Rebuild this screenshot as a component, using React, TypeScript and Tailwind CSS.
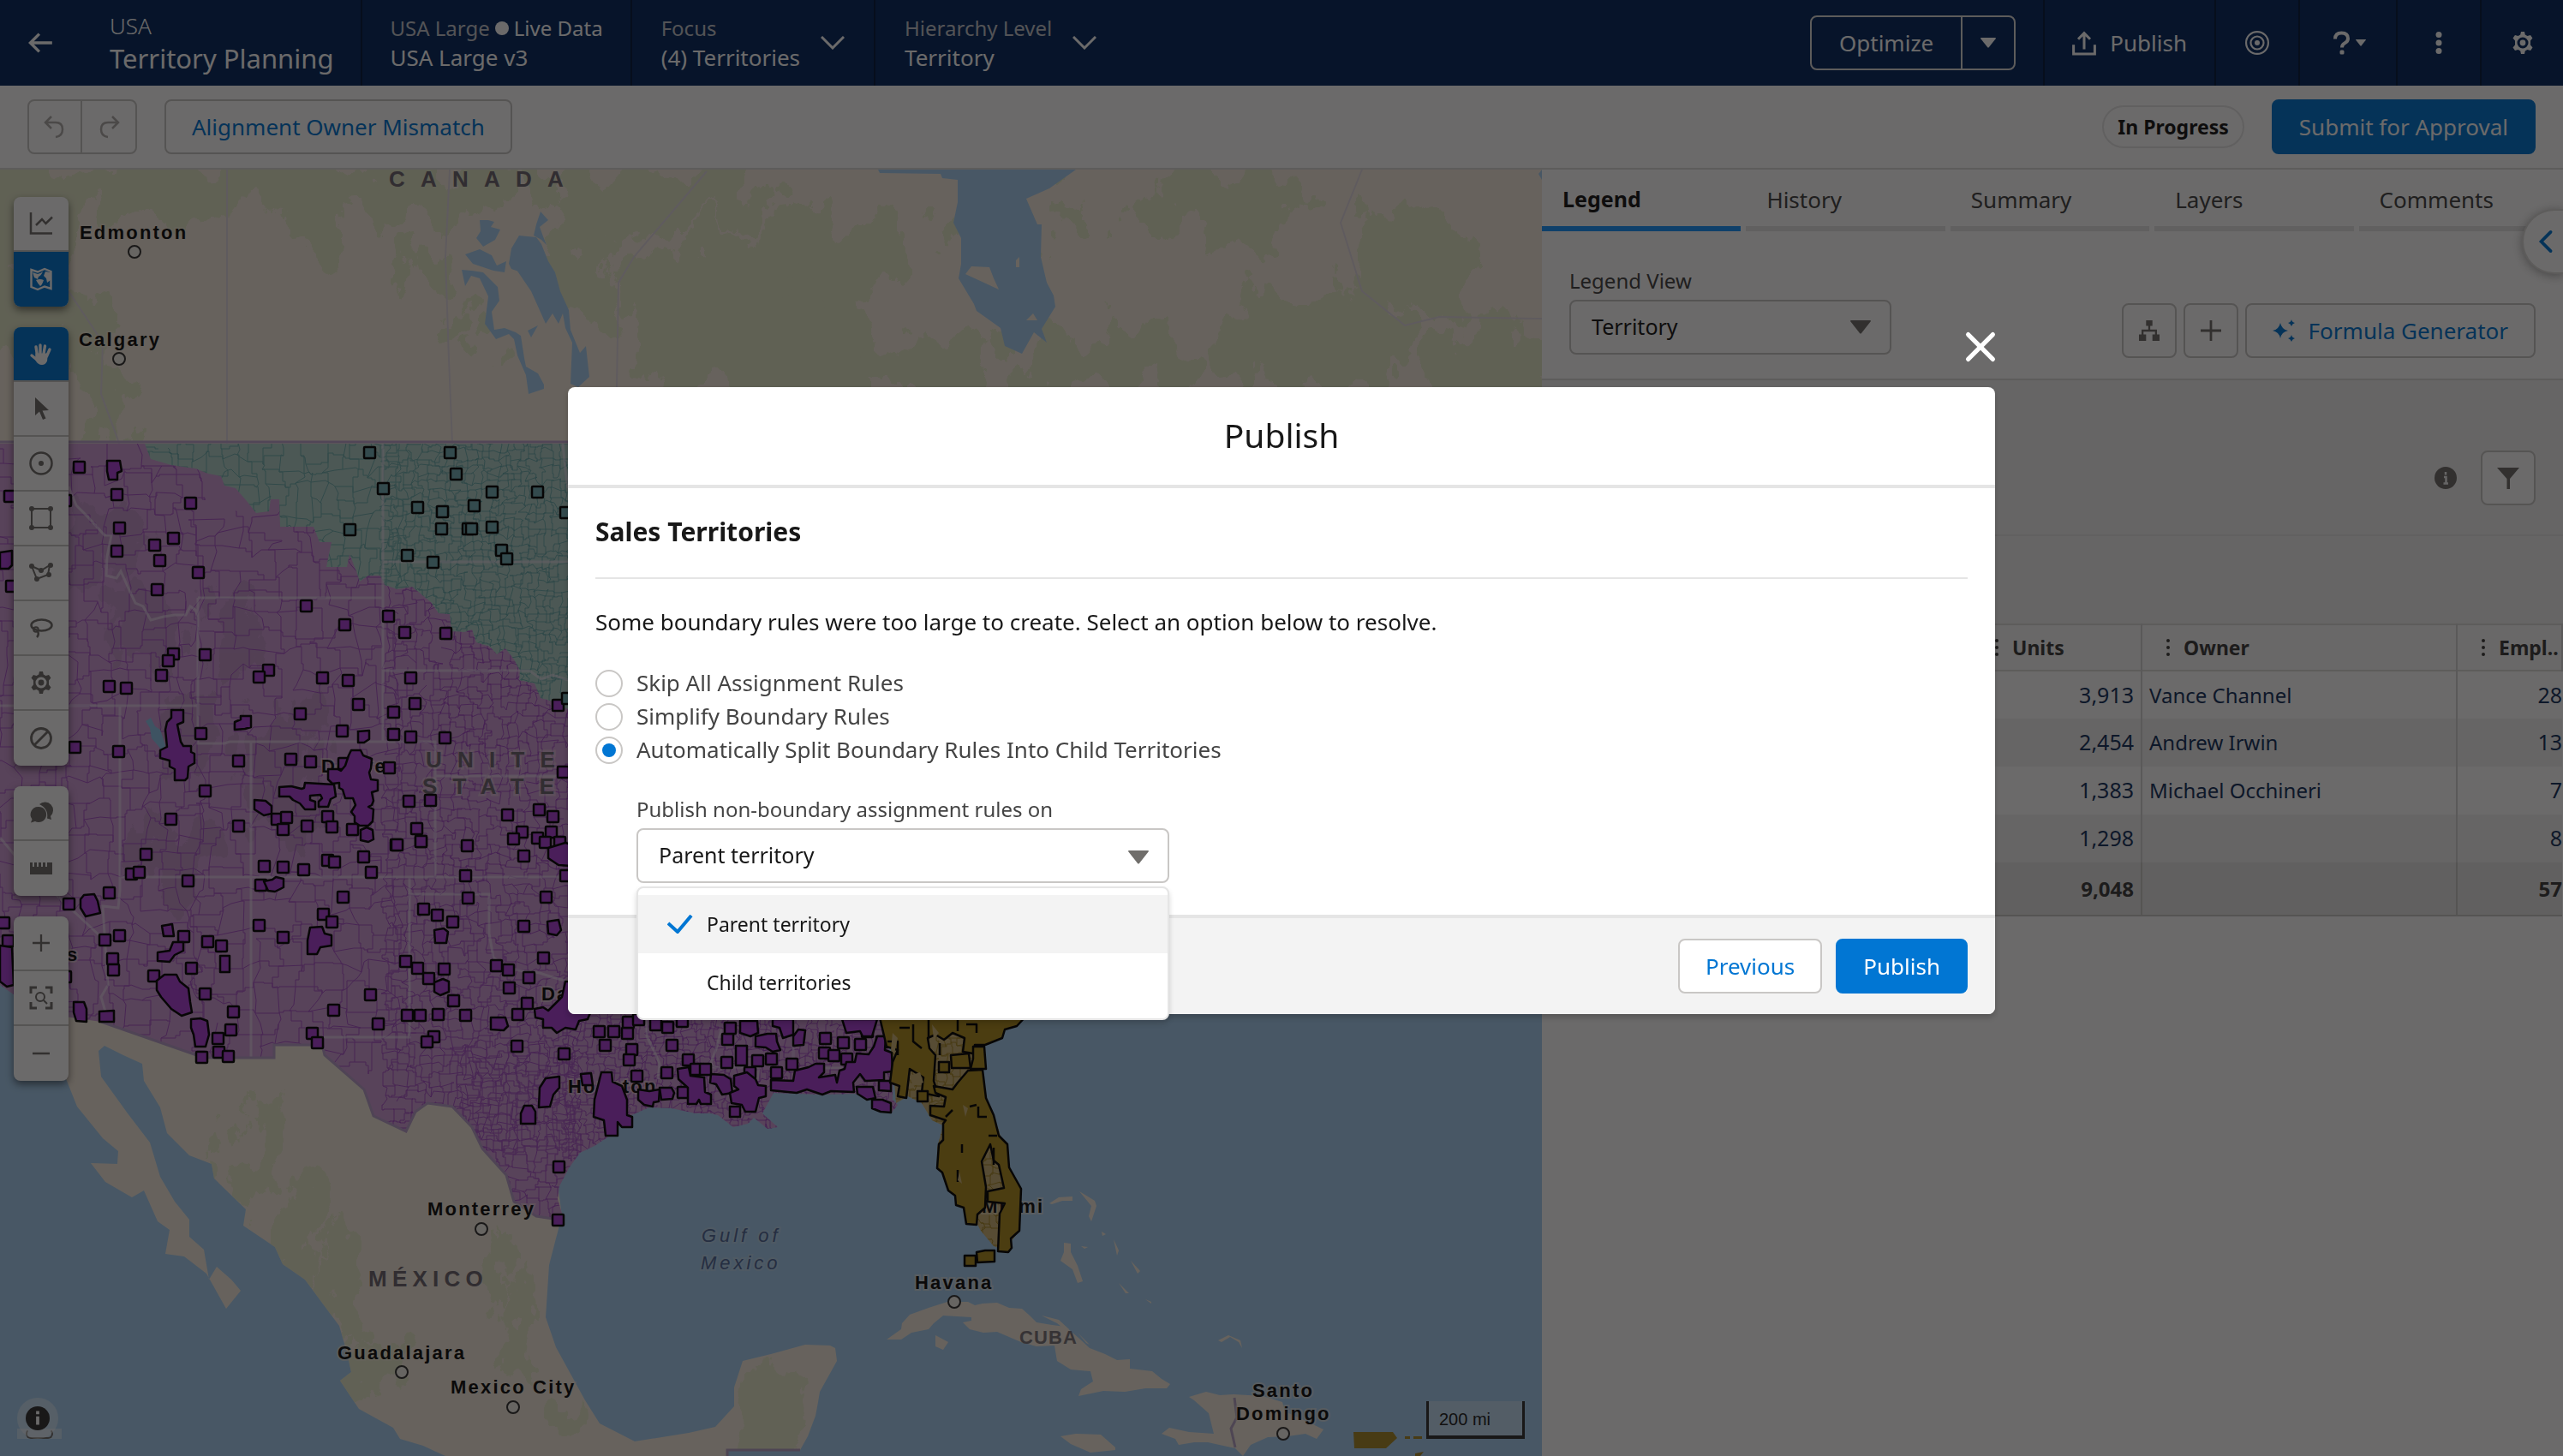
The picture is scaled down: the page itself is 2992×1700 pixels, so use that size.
//territory-planning.tsx
import type { ReactNode } from "react";
import clsx from "clsx";

type Point = [number, number];

/* ---------- map geometry ---------- */

const toPath = (points: Point[]) => `M${points.map((p) => p.join(" ")).join("L")}Z`;

// small seeded generator so the zip code mesh is stable between renders
function random(seed: number) {
	let s = seed;
	return () => {
		s = (s * 16807) % 2147483647;
		return s / 2147483647;
	};
}

function mesh(x0: number, y0: number, x1: number, y1: number, step: number, seed: number) {
	const rnd = random(seed);
	const cols = Math.ceil((x1 - x0) / step) + 1;
	const rows = Math.ceil((y1 - y0) / step) + 1;
	const grid: Point[][] = [];
	for (let r = 0; r < rows; r++) {
		grid.push([]);
		for (let c = 0; c < cols; c++) {
			grid[r].push([
				Math.round(x0 + c * step + (rnd() - 0.5) * step * 0.9),
				Math.round(y0 + r * step + (rnd() - 0.5) * step * 0.9),
			]);
		}
	}
	let d = "";
	const link = (a: Point, b: Point) => {
		if (rnd() < 0.12) return;
		const mx = Math.round(a[0] + (b[0] - a[0]) * rnd());
		const my = Math.round(a[1] + (b[1] - a[1]) * rnd());
		d += rnd() < 0.6 ? `M${a[0]} ${a[1]}H${mx}V${my}H${b[0]}V${b[1]}` : `M${a[0]} ${a[1]}L${mx + 2} ${my - 2}L${b[0]} ${b[1]}`;
	};
	for (let r = 0; r < rows; r++) {
		for (let c = 0; c < cols; c++) {
			if (c + 1 < cols) link(grid[r][c], grid[r][c + 1]);
			if (r + 1 < rows) link(grid[r][c], grid[r + 1][c]);
		}
	}
	return d;
}

// cx, cy, rx, ry of the vegetation areas, roughened by the "rough" filter
const GREENS = [
	[40, 230, 110, 50], [180, 220, 120, 30], [30, 330, 60, 90], [100, 400, 30, 80],
	[120, 470, 22, 50], [360, 215, 150, 34], [375, 262, 26, 26], [500, 225, 110, 32],
	[490, 312, 26, 24], [535, 372, 22, 20], [560, 408, 30, 10], [680, 240, 60, 60],
	[690, 330, 30, 60], [800, 230, 110, 40], [860, 370, 140, 100], [930, 420, 110, 70],
	[970, 300, 110, 50], [1080, 430, 80, 30], [1240, 250, 28, 30], [1300, 420, 110, 40],
	[1420, 240, 90, 50], [1530, 400, 110, 70], [1650, 300, 80, 70], [1740, 430, 90, 60],
];

const MEXICO_GREENS = [
	[300, 1340, 22, 70], [350, 1440, 26, 80], [400, 1500, 28, 60], [430, 1590, 26, 50],
	[575, 1480, 14, 50], [600, 1550, 16, 60], [660, 1650, 30, 16], [900, 1650, 34, 60], [1484, 1665, 10, 14],
];

const MEXICO = toPath([
	[40, 1180], [78, 1262], [90, 1292], [103, 1308], [120, 1329], [138, 1344], [137, 1359], [106, 1358], [123, 1380], [154, 1398],
	[168, 1390], [184, 1426], [198, 1436], [193, 1464], [215, 1467], [241, 1487], [264, 1528], [281, 1507], [270, 1494], [253, 1479],
	[244, 1494], [238, 1459], [221, 1444], [221, 1424], [204, 1403], [187, 1374], [175, 1334], [149, 1300], [118, 1257], [115, 1227],
	[122, 1221], [144, 1232], [166, 1242], [168, 1262], [187, 1293], [195, 1323], [221, 1349], [247, 1359], [250, 1376], [287, 1412],
	[284, 1431], [321, 1456], [330, 1476], [356, 1494], [396, 1548], [405, 1579], [410, 1602], [397, 1612], [419, 1645], [459, 1667],
	[467, 1680], [494, 1688], [520, 1700], [850, 1700], [849, 1693], [934, 1693], [943, 1677], [952, 1653], [955, 1637], [957, 1625],
	[977, 1589], [975, 1574], [969, 1571], [940, 1570], [900, 1581], [867, 1589], [857, 1620], [857, 1642], [835, 1666], [804, 1673],
	[741, 1683], [700, 1662], [683, 1635], [649, 1573], [637, 1538], [641, 1477], [649, 1446], [656, 1420], [640, 1300], [480, 1200], [100, 1170],
]);

const USA_WEST = toPath([
	[0, 518], [1060, 518], [1040, 1190], [1035, 1215], [1042, 1240], [1042, 1284], [1048, 1290], [1040, 1300], [1015, 1283], [998, 1277],
	[957, 1278], [903, 1276], [890, 1300], [908, 1316], [896, 1318], [880, 1305], [873, 1312], [856, 1316], [838, 1302], [830, 1300],
	[812, 1300], [784, 1294], [758, 1293], [735, 1303], [712, 1326], [694, 1338], [677, 1346], [664, 1364], [653, 1385], [651, 1400],
	[657, 1420], [650, 1425], [626, 1420], [600, 1403], [591, 1372], [563, 1341], [551, 1316], [528, 1292], [499, 1288], [485, 1298],
	[474, 1321], [436, 1303], [425, 1272], [379, 1232], [376, 1220], [320, 1220], [320, 1235], [238, 1235], [118, 1193], [76, 1187],
	[46, 1190], [20, 1164], [0, 1150],
]);

const TEAL = toPath([
	[169, 518], [176, 536], [200, 543], [228, 547], [243, 553], [258, 556], [262, 567], [275, 570], [288, 585], [299, 599], [314, 597],
	[316, 583], [326, 583], [327, 615], [366, 615], [373, 633], [387, 633], [381, 662], [405, 662], [408, 647], [416, 667], [420, 679],
	[430, 672], [444, 672], [449, 683], [464, 688], [481, 685], [492, 694], [503, 703], [512, 716], [525, 717], [527, 737], [542, 738],
	[551, 735], [556, 750], [572, 755], [580, 764], [590, 757], [600, 770], [607, 783], [606, 794], [624, 798], [631, 815], [642, 818],
	[663, 828], [760, 828], [760, 518],
]);

const FLORIDA = toPath([
	[1035, 1184], [1200, 1184], [1170, 1205], [1150, 1220], [1147, 1250], [1152, 1284], [1166, 1320], [1178, 1363], [1192, 1388],
	[1190, 1437], [1172, 1460], [1160, 1455], [1145, 1437], [1125, 1400], [1100, 1369], [1094, 1340], [1101, 1314], [1088, 1308], [1076, 1288], [1060, 1280], [1046, 1288], [1042, 1240],
]);

const GOLD_CLUSTERS: Point[][] = [
	[[1026, 1184], [1200, 1184], [1187, 1198], [1173, 1202], [1170, 1212], [1150, 1220], [1138, 1220], [1136, 1230], [1124, 1228], [1126, 1212], [1112, 1206], [1102, 1214], [1092, 1208], [1083, 1212], [1085, 1224], [1092, 1232], [1090, 1262], [1096, 1280], [1076, 1276], [1078, 1258], [1062, 1248], [1058, 1282], [1048, 1280], [1050, 1268], [1039, 1264], [1042, 1240], [1048, 1226], [1035, 1222]],
	[[1110, 1232], [1131, 1230], [1133, 1247], [1111, 1247]],
	[[1136, 1236], [1136, 1222], [1149, 1222], [1151, 1248], [1133, 1248]],
	[[1096, 1240], [1108, 1240], [1108, 1252], [1096, 1252]],
	[[1130, 1250], [1147, 1249], [1151, 1282], [1160, 1302], [1166, 1326], [1176, 1336], [1178, 1363], [1192, 1388], [1190, 1437], [1180, 1446], [1181, 1457], [1177, 1462], [1165, 1461], [1167, 1417], [1173, 1405], [1153, 1403], [1153, 1391], [1172, 1387], [1166, 1360], [1160, 1355], [1156, 1336], [1146, 1356], [1151, 1386], [1150, 1410], [1141, 1418], [1140, 1430], [1128, 1429], [1125, 1410], [1116, 1407], [1115, 1396], [1107, 1390], [1100, 1369], [1094, 1364], [1096, 1336], [1101, 1331], [1101, 1312], [1104, 1308], [1086, 1302], [1086, 1291], [1102, 1292], [1104, 1281], [1092, 1276], [1090, 1268], [1112, 1272], [1118, 1264]],
	[[1126, 1466], [1139, 1466], [1139, 1478], [1126, 1478]],
	[[1140, 1462], [1150, 1460], [1161, 1460], [1161, 1473], [1141, 1474]],
	[[1071, 1274], [1083, 1274], [1083, 1286], [1071, 1286]],
];

const PURPLE_CLUSTERS: Point[][] = [
	[[125, 538], [140, 538], [142, 550], [137, 552], [137, 560], [127, 560], [125, 550]],
	[[0, 645], [14, 643], [14, 660], [10, 664], [0, 664]],
	// Salt Lake City
	[[200, 829], [214, 829], [214, 843], [207, 846], [211, 866], [214, 871], [223, 871], [223, 878], [227, 880], [227, 891], [220, 895], [219, 908], [216, 911], [204, 911], [204, 898], [198, 895], [198, 888], [187, 885], [187, 876], [195, 872], [193, 852], [195, 843], [200, 838]],
	// Denver
	[[410, 876], [421, 876], [424, 882], [434, 886], [433, 897], [431, 902], [433, 910], [441, 911], [441, 923], [434, 925], [436, 935], [434, 940], [430, 942], [436, 945], [435, 959], [430, 964], [420, 964], [414, 960], [414, 953], [410, 948], [415, 940], [412, 932], [403, 932], [400, 922], [396, 920], [396, 914], [388, 915], [383, 910], [383, 898], [394, 898], [398, 900], [403, 894], [407, 882]],
	[[326, 919], [340, 918], [352, 921], [355, 920], [356, 914], [390, 916], [392, 930], [386, 933], [383, 942], [372, 942], [372, 936], [376, 932], [374, 928], [362, 929], [362, 934], [368, 936], [368, 945], [356, 945], [350, 938], [342, 934], [338, 930], [326, 930]],
	[[297, 934], [310, 935], [317, 941], [317, 950], [308, 952], [297, 945]],
	[[421, 969], [428, 966], [435, 969], [436, 980], [430, 983], [421, 981]],
	[[274, 843], [281, 840], [281, 836], [293, 836], [293, 849], [286, 851], [274, 852]],
	[[418, 854], [431, 853], [431, 863], [425, 867], [418, 867]],
	// Las Vegas
	[[98, 1045], [110, 1044], [114, 1052], [117, 1066], [100, 1070], [94, 1060], [94, 1050]],
	// Los Angeles
	[[0, 1104], [14, 1106], [16, 1150], [8, 1152], [0, 1146]],
	[[86, 1170], [98, 1170], [101, 1178], [101, 1193], [89, 1192], [86, 1182]],
	[[116, 1181], [133, 1180], [133, 1193], [116, 1193]],
	// Phoenix
	[[189, 1081], [201, 1079], [203, 1093], [191, 1093]],
	[[184, 1112], [198, 1110], [202, 1100], [214, 1100], [214, 1110], [204, 1115], [198, 1123], [184, 1122]],
	[[257, 1116], [268, 1116], [268, 1135], [257, 1135]],
	[[183, 1145], [192, 1138], [206, 1138], [210, 1146], [220, 1154], [222, 1170], [224, 1182], [212, 1186], [200, 1178], [188, 1164], [183, 1156]],
	// Tucson
	[[223, 1190], [234, 1189], [242, 1192], [244, 1208], [240, 1222], [228, 1222], [226, 1208], [223, 1200]],
	// Albuquerque
	[[362, 1083], [376, 1082], [379, 1090], [387, 1092], [387, 1104], [374, 1106], [370, 1114], [359, 1114], [359, 1098]],
	[[308, 1029], [318, 1027], [322, 1024], [331, 1026], [331, 1036], [321, 1041], [313, 1040]],
	[[507, 1147], [517, 1143], [524, 1146], [524, 1158], [514, 1162], [507, 1158]],
	[[507, 1086], [518, 1084], [523, 1088], [521, 1101], [508, 1101]],
	[[573, 1188], [590, 1188], [593, 1198], [588, 1203], [573, 1202]],
	[[639, 1076], [652, 1074], [655, 1086], [650, 1092], [640, 1090]],
	[[640, 990], [660, 984], [680, 990], [680, 1012], [652, 1010], [640, 1002]],
	// Dallas
	[[624, 1178], [634, 1176], [640, 1180], [656, 1164], [660, 1146], [676, 1146], [690, 1180], [686, 1190], [676, 1192], [672, 1202], [660, 1200], [650, 1206], [644, 1200], [634, 1200], [634, 1190], [625, 1188]],
	// Austin and San Antonio
	[[637, 1259], [653, 1257], [653, 1270], [646, 1278], [642, 1292], [629, 1293], [630, 1270]],
	[[612, 1291], [621, 1291], [625, 1298], [625, 1312], [608, 1312], [608, 1300]],
	// Houston
	[[702, 1252], [714, 1252], [715, 1263], [726, 1268], [732, 1284], [732, 1302], [738, 1304], [738, 1316], [726, 1316], [721, 1310], [721, 1326], [707, 1326], [705, 1308], [693, 1304], [694, 1284], [699, 1264]],
	[[678, 1254], [690, 1253], [692, 1267], [680, 1267]],
	[[745, 1272], [758, 1274], [770, 1272], [769, 1286], [763, 1287], [762, 1292], [752, 1290], [745, 1284]],
	[[770, 1270], [784, 1270], [787, 1276], [785, 1283], [772, 1284]],
	// Louisiana
	[[791, 1248], [804, 1246], [806, 1256], [822, 1258], [823, 1275], [830, 1278], [830, 1289], [818, 1289], [816, 1284], [813, 1289], [803, 1289], [803, 1270], [792, 1260]],
	[[830, 1254], [845, 1255], [853, 1260], [855, 1276], [843, 1278], [836, 1266], [829, 1264]],
	[[857, 1256], [872, 1252], [882, 1260], [885, 1267], [894, 1268], [894, 1280], [886, 1282], [882, 1298], [870, 1298], [866, 1290], [854, 1288], [852, 1276], [862, 1272], [857, 1268]],
	[[852, 1292], [864, 1292], [864, 1304], [852, 1304]],
	[[859, 1221], [872, 1221], [872, 1244], [859, 1244]],
	[[864, 1192], [884, 1192], [885, 1206], [876, 1210], [864, 1206]],
	[[882, 1210], [896, 1207], [906, 1207], [907, 1216], [911, 1226], [902, 1228], [894, 1223], [882, 1222]],
	[[902, 1190], [926, 1190], [926, 1208], [914, 1212], [910, 1200], [902, 1198]],
	[[926, 1210], [932, 1202], [940, 1203], [938, 1220], [926, 1221]],
	[[983, 1190], [1024, 1190], [1018, 1210], [1007, 1210], [1004, 1204], [988, 1206]],
	// gulf coast
	[[900, 1261], [926, 1262], [928, 1250], [944, 1246], [952, 1242], [962, 1242], [962, 1252], [956, 1258], [975, 1255], [977, 1264], [980, 1250], [986, 1248], [988, 1240], [998, 1240], [1000, 1230], [1014, 1231], [1020, 1222], [1024, 1210], [1034, 1210], [1033, 1226], [1041, 1229], [1042, 1251], [1032, 1252], [1032, 1261], [1010, 1262], [1004, 1254], [996, 1264], [997, 1275], [970, 1274], [960, 1278], [942, 1272], [930, 1276], [900, 1273]],
	[[1000, 1269], [1019, 1269], [1022, 1282], [1012, 1284], [1001, 1277]],
	[[1026, 1262], [1040, 1262], [1040, 1274], [1026, 1273]],
	[[1018, 1284], [1030, 1284], [1040, 1288], [1040, 1299], [1028, 1298], [1018, 1294]],
];

const PURPLE_PINS: Point[] = [
	[92, 545], [136, 577], [222, 587], [139, 616], [202, 628], [180, 636], [136, 643], [186, 654], [231, 668], [183, 688],
	[357, 707], [402, 729], [453, 719], [472, 738], [520, 739], [239, 764], [202, 763], [196, 771], [188, 788], [127, 801],
	[147, 803], [313, 782], [302, 790], [376, 791], [406, 794], [479, 791], [484, 821], [418, 822], [459, 831], [350, 833],
	[651, 823], [234, 856], [399, 853], [459, 857], [479, 860], [519, 861], [87, 872], [138, 877], [278, 888], [339, 886],
	[362, 889], [401, 891], [454, 896], [239, 923], [477, 935], [502, 934], [657, 901], [199, 956], [278, 964], [323, 956],
	[334, 954], [330, 968], [358, 964], [382, 953], [387, 965], [411, 968], [486, 967], [462, 986], [491, 982], [545, 987],
	[592, 951], [629, 945], [645, 953], [609, 971], [599, 979], [643, 971], [627, 978], [636, 983], [653, 983], [170, 997],
	[11, 579], [13, 684], [76, 584], [24, 538], [153, 1020], [162, 1018], [127, 1042], [219, 1028], [80, 1055], [122, 1097],
	[139, 1092], [131, 1119], [132, 1132], [214, 1093], [242, 1099], [258, 1104], [223, 1130], [179, 1139], [239, 1160],
	[272, 1181], [269, 1202], [254, 1212], [255, 1228], [266, 1233], [235, 1234], [304, 1033], [308, 1011], [330, 1012],
	[354, 1015], [382, 1004], [390, 1006], [424, 1000], [433, 1018], [463, 986], [491, 982], [543, 1022], [400, 1047],
	[377, 1067], [387, 1076], [302, 1080], [330, 1094], [432, 1161], [389, 1179], [441, 1195], [364, 1206], [370, 1217],
	[494, 1061], [510, 1068], [528, 1076], [546, 1048], [473, 1122], [487, 1130], [518, 1131], [500, 1142], [529, 1168],
	[475, 1185], [490, 1185], [511, 1184], [543, 1185], [506, 1210], [498, 1216], [579, 1127], [593, 1132], [594, 1153],
	[617, 1141], [615, 1171], [604, 1184], [611, 1081], [637, 1047], [634, 1118], [603, 1221], [658, 1230], [611, 999],
	[660, 1022], [4, 1077], [9, 1098], [76, 1140], [699, 1204], [716, 1204], [732, 1206], [706, 1220], [737, 1225], [734, 1237],
	[733, 1193], [745, 1190], [765, 1196], [779, 1199], [796, 1192], [784, 1220], [743, 1256], [778, 1252], [803, 1237],
	[812, 1248], [823, 1248], [797, 1275], [848, 1240], [849, 1213], [852, 1200], [884, 1238], [900, 1236], [924, 1242],
	[906, 1252], [875, 1252], [963, 1212], [984, 1217], [1004, 1219], [962, 1229], [973, 1232], [988, 1236], [1012, 1204],
	[1029, 1216], [652, 1362], [651, 1424],
];

const TEAL_PINS: Point[] = [
	[431, 528], [525, 528], [532, 553], [447, 570], [574, 574], [627, 574], [487, 592], [553, 590], [516, 597], [408, 618],
	[515, 617], [546, 617], [550, 617], [574, 615], [475, 648], [505, 656], [585, 642], [591, 652], [660, 598], [662, 815],
];

const STATE_LINES = [
	"M447 518V690M447 690V866M231 698H448M231 698V868H262L268 866H508V1024M447 783H618L632 793L645 788L663 794M447 656H663",
	"M0 824H231M140 824V1040L138 1060L120 1058L122 1090L126 1150L118 1164L125 1188M293 866V1235M140 1024H663M508 906H663",
	"M0 978L20 1002L118 1094M478 1024V1211H378M478 1044H571V1090L576 1118L592 1130L612 1134L630 1136L642 1140L663 1146",
	"M80 568L89 590L102 603L113 615L122 625H130L125 650L124 672L136 675L141 667L150 687L158 704L167 708L176 724L191 720L204 718L217 718L222 708L228 712L231 720",
	"M755 1190V1210L763 1226L770 1242L768 1260M842 1202L836 1225L830 1240L832 1246H886L884 1262M926 1190V1236M960 1247H984",
	"M1096 1262L1120 1264M657 518L660 548L663 570",
].join("");

interface MapLabelProps {
	x: number;
	y: number;
	children: string;
	dot?: Point;
}

function CityLabel({ x, y, children, dot }: MapLabelProps) {
	return (
		<g>
			<text x={x} y={y} fill="#111" stroke="#f6ecde" strokeOpacity=".5" strokeWidth="4" className="text-[22px] font-bold tracking-widest [paint-order:stroke]">
				{children}
			</text>
			{dot && <circle cx={dot[0]} cy={dot[1]} r="7" fill="#f6f2ec" stroke="#333" strokeWidth="2" />}
		</g>
	);
}

function TerritoryMap() {
	return (
		<svg
			viewBox="0 198 1800 1502"
			preserveAspectRatio="xMinYMin slice"
			className="absolute inset-0 h-full w-full font-['Liberation_Sans',Arial,sans-serif]"
			role="img"
			aria-label="Territory map"
		>
			<defs>
				<clipPath id="canada"><rect y="198" width="1800" height="318" /></clipPath>
				<clipPath id="west"><path d={USA_WEST} /></clipPath>
				<clipPath id="teal"><path d={TEAL} /></clipPath>
				<clipPath id="florida"><path d={FLORIDA} /></clipPath>
				<clipPath id="mexico"><path d={MEXICO} /></clipPath>
				<filter id="rough" filterUnits="userSpaceOnUse" x="0" y="150" width="1800" height="1550">
					<feTurbulence type="fractalNoise" baseFrequency="0.022 0.014" numOctaves="5" seed="4" />
					<feDisplacementMap in="SourceGraphic" scale="130" xChannelSelector="R" yChannelSelector="G" />
				</filter>
			</defs>
			<rect y="198" width="1800" height="1502" fill="#a8d0f2" />
			<rect y="198" width="1800" height="322" fill="#f6ecde" />
			<g clipPath="url(#canada)">
				<g fill="#e0e8c4" opacity=".8" filter="url(#rough)">
					{GREENS.map(([cx, cy, rx, ry]) => <ellipse key={`${cx}-${cy}`} cx={cx} cy={cy} rx={rx} ry={ry} />)}
				</g>
			</g>
			<g fill="none" stroke="#e2d9e2" strokeWidth="2">
				<path d="M265 198V518M525 198L520 300L524 420L528 518M825 200L740 300L722 330L720 452" />
				<path d="M80 340L120 400L118 460L140 520M1590 198L1565 260L1590 340L1640 380L1680 370L1800 372" />
			</g>
			<g fill="#a8d0f2">
				<path d="M1025 198L1027 202L1098 203L1100 208L1118 210V236L1113 260L1122 278V308L1119 325L1137 355L1140 363L1168 383L1173 404L1193 413L1207 388L1222 400L1216 384L1232 358L1230 345L1222 330L1215 300L1216 262H1211L1198 232L1225 220L1256 198Z" />
				<path d="M606 275L626 277L632 285L640 305L648 318L654 340L664 362L666 385L677 412L684 404L688 440L675 452L666 448L668 400L660 383L657 366L652 378L645 366L637 378L629 360L620 340L603 315L614 320L597 314L594 308L597 290Z" />
				<path d="M539 315L551 316L564 318L581 335L583 351L574 364L577 385L589 383L602 388L608 392L612 418L614 428L628 436L635 449V454L617 460L614 438L604 415L600 396L594 390L579 396L566 378L570 346L560 325L550 322L543 334Z" />
				<path d="M543 297L560 291L574 298L580 310L591 305L589 318L576 316L552 308Z" />
				<path d="M560 257H570L577 259L573 265L584 268L578 280L564 288L556 278L561 270Z" />
				<path d="M631 247L640 257L630 265L634 276L638 286L632 280L623 275L626 262Z" />
				<path d="M616 386L628 380L620 394Z" />
				<path d="M1796 203L1800 198V210Z" />
			</g>
			<path d="M1127 320L1134 311L1155 312L1160 325L1166 338Z" fill="#f6ecde" />
			<path d="M1186 304L1190 300V312H1186ZM1198 374L1206 366L1211 374Z" fill="#f6ecde" />

			<path d={MEXICO} fill="#f6ecde" />
			<g clipPath="url(#mexico)">
				<g fill="#e0e8c4" opacity=".7" filter="url(#rough)">
					{MEXICO_GREENS.map(([cx, cy, rx, ry]) => <ellipse key={`${cx}-${cy}`} cx={cx} cy={cy} rx={rx} ry={ry} />)}
				</g>
			</g>
			<path d="M849 1700V1693H934" fill="none" stroke="#b6a4c6" strokeWidth="3" />

			{/* caribbean */}
			<g fill="#f6ecde">
				<path d="M1035 1564L1052 1552L1053 1545L1062 1535L1084 1527L1106 1520L1130 1520L1138 1524L1147 1522L1164 1521L1178 1527L1193 1528L1202 1536L1210 1544L1228 1547L1244 1549L1259 1562L1272 1574L1290 1581L1304 1588L1319 1587V1598L1345 1601L1356 1610L1366 1616L1362 1621L1337 1621L1313 1625L1288 1624L1259 1630L1262 1622L1276 1613L1273 1601L1250 1599L1234 1589L1231 1571L1210 1572L1192 1567L1164 1555L1148 1556L1132 1552L1124 1544L1134 1542V1538L1101 1536L1090 1545L1084 1552L1064 1556L1052 1564Z" />
				<path d="M1092 1559L1107 1567L1101 1576L1092 1572Z" />
				<path d="M1388 1631L1408 1625L1424 1629L1440 1628L1474 1630L1497 1637L1500 1648L1520 1657L1545 1669L1537 1680L1524 1674L1503 1677L1480 1678L1460 1687L1451 1700L1442 1691L1410 1684L1394 1684L1376 1687L1372 1680L1356 1674L1365 1667L1388 1672L1417 1674L1411 1650L1394 1635Z" />
				<path d="M1238 1677L1256 1674L1285 1675L1302 1690V1693L1273 1696L1250 1686Z" />
				<path d="M1225 1405L1236 1398L1252 1397V1402L1240 1402L1228 1406ZM1260 1391L1278 1402L1280 1408L1274 1426L1271 1420L1274 1408ZM1242 1451L1250 1452V1462L1258 1478L1264 1496L1258 1498L1252 1482L1238 1472L1242 1462ZM1286 1438L1291 1441L1287 1443ZM1300 1447L1306 1460L1304 1466ZM1320 1472L1331 1484L1328 1487ZM1306 1498L1318 1510H1314ZM1337 1517L1344 1520V1522ZM1422 1565L1434 1559L1448 1565L1450 1574L1446 1567L1436 1561L1426 1567Z" />
				<path d="M1216 1536L1236 1541L1248 1552L1244 1553L1234 1545ZM1258 1556L1272 1570L1268 1568ZM1262 1455L1270 1456L1266 1458Z" />
			</g>
			<path d="M1441 1632L1444 1655L1437 1668L1442 1690" fill="none" stroke="#b6a4c6" strokeWidth="3" />
			<path d="M1580 1672H1626L1631 1679L1618 1691H1581Z" fill="#a88a2a" />
			<path d="M1640 1677H1646V1680H1640ZM1650 1677H1660V1680H1650ZM1652 1697L1662 1695L1658 1700H1652Z" fill="#a88a2a" />

			{/* territories */}
			<path d={USA_WEST} fill="#cf9dd6" />
			<g clipPath="url(#west)">
				<g fill="#9c86a6" opacity=".25" filter="url(#rough)">
					<ellipse cx="110" cy="640" rx="50" ry="50" />
					<ellipse cx="170" cy="740" rx="40" ry="60" />
					<ellipse cx="270" cy="740" rx="36" ry="50" />
					<ellipse cx="230" cy="850" rx="40" ry="40" />
					<ellipse cx="330" cy="900" rx="40" ry="80" />
					<ellipse cx="200" cy="1000" rx="50" ry="50" />
				</g>
				<g fill="none" stroke="#9b3cc2" strokeWidth="1" opacity=".75">
					<path d={mesh(0, 518, 230, 1200, 21, 301)} />
					<path d={mesh(230, 600, 450, 1240, 23, 303)} />
					<path d={mesh(450, 660, 668, 1340, 11, 307)} />
					<path d={mesh(530, 1220, 668, 1420, 12, 311)} />
					<path d={mesh(660, 1180, 1060, 1350, 8, 313)} />
				</g>
			</g>
			<path d="M170 842L176 838L181 848L187 852L193 870L190 878L184 870L177 862L175 850Z" fill="#8ec6ea" />
			<path d={TEAL} fill="#b2d2cb" />
			<g clipPath="url(#teal)" fill="none" stroke="#5fa5a6" strokeWidth="1" opacity=".8">
				<path d={mesh(160, 518, 450, 700, 17, 401)} />
				<path d={mesh(446, 518, 680, 830, 9, 403)} />
			</g>
			<path d={STATE_LINES} fill="none" stroke="#f1e6f4" strokeOpacity=".55" strokeWidth="3" />
			<path d="M0 516H1800" stroke="#bfa6cf" strokeWidth="3" />
			<path d="M118 1193L238 1235H320V1220H376L379 1232L425 1272L436 1303L474 1321L485 1298L499 1288L528 1292L551 1316L563 1341L591 1372L600 1403L626 1420L652 1424" fill="none" stroke="#b9a0cb" strokeWidth="3" />
			<path d={FLORIDA} fill="#cdb478" />
			<g clipPath="url(#florida)" fill="none" stroke="#a88a2a" strokeWidth="1">
				<path d={mesh(1030, 1184, 1200, 1480, 9, 501)} />
			</g>

			{/* map text */}
			<g fill="#6e6670" className="text-[26px] font-bold">
				<text x="454" y="218" className="tracking-[0.7em]">CANADA</text>
				<text x="497" y="896" stroke="#f6ecde" strokeOpacity=".4" strokeWidth="5" className="tracking-[0.7em] [paint-order:stroke]">UNITE</text>
				<text x="493" y="927" stroke="#f6ecde" strokeOpacity=".4" strokeWidth="5" className="tracking-[0.7em] [paint-order:stroke]">STATE</text>
				<text x="430" y="1502" className="tracking-[0.24em]">MÉXICO</text>
			</g>
			<text x="1190" y="1569" fill="#7c767c" className="text-[22px] font-bold tracking-wider">CUBA</text>
			<g fill="#52699a" stroke="#f6ecde" strokeOpacity=".2" strokeWidth="4" className="text-[22px] italic tracking-[0.18em] [paint-order:stroke]">
				<text x="819" y="1450">Gulf of</text>
				<text x="818" y="1482">Mexico</text>
			</g>
			<CityLabel x={93} y={279} dot={[157, 294]}>Edmonton</CityLabel>
			<CityLabel x={92} y={404} dot={[139, 419]}>Calgary</CityLabel>
			<CityLabel x={375} y={902}>Denver</CityLabel>
			<CityLabel x={78} y={1122}>s</CityLabel>
			<CityLabel x={632} y={1168}>Dallas</CityLabel>
			<CityLabel x={663} y={1276}>Houston</CityLabel>
			<CityLabel x={1146} y={1416}>Miami</CityLabel>
			<CityLabel x={499} y={1419} dot={[562, 1435]}>Monterrey</CityLabel>
			<CityLabel x={394} y={1587} dot={[469, 1602]}>Guadalajara</CityLabel>
			<CityLabel x={526} y={1627} dot={[599, 1643]}>Mexico City</CityLabel>
			<CityLabel x={1068} y={1505} dot={[1114, 1520]}>Havana</CityLabel>
			<CityLabel x={1462} y={1631}>Santo</CityLabel>
			<CityLabel x={1443} y={1658} dot={[1498, 1674]}>Domingo</CityLabel>

			{/* clusters and pins */}
			<g stroke="#050505" strokeWidth="2.5" strokeLinejoin="round">
				<g fill="#ac42d8">
					{PURPLE_PINS.map(([x, y], i) => <rect key={i} x={x - 6} y={y - 6} width="13" height="13" rx="1" />)}
					{PURPLE_CLUSTERS.map((c, i) => <path key={i} d={toPath(c)} />)}
				</g>
				<g fill="#74afb6">
					{TEAL_PINS.map(([x, y], i) => <rect key={i} x={x - 6} y={y - 6} width="13" height="13" rx="1" />)}
				</g>
				<g fill="#b08f21">
					{GOLD_CLUSTERS.map((c, i) => <path key={i} d={toPath(c)} />)}
					<path d="M1036 1216H1048V1232M1066 1196V1216L1076 1224M1084 1190V1212M1118 1190V1204M1128 1196H1140V1206M1104 1304L1112 1296M1123 1336V1346M1142 1292V1304H1152M1118 1366V1380M1132 1292L1140 1290M1050 1200H1062M1097 1218V1232M1154 1326H1164M1160 1340V1360" fill="none" />
				</g>
			</g>
			<path d="M1124 1290L1130 1294L1127 1304ZM1120 1368L1123 1382L1118 1378ZM1042 1206L1048 1212L1044 1230L1040 1226ZM1062 1256L1074 1252L1078 1264L1066 1268ZM1088 1196L1096 1206L1090 1214Z" fill="#cdb478" />
		</svg>
	);
}

/* ---------- icons ---------- */

interface IconProps {
	size?: string;
	children: ReactNode;
}

function Icon({ size = "size-[26px]", children }: IconProps) {
	return (
		<svg viewBox="0 0 26 26" fill="none" stroke="currentColor" strokeWidth="2" className={clsx(size, "shrink-0 overflow-visible")} aria-hidden="true">
			{children}
		</svg>
	);
}

const gear = (
	<Icon>
		<path fill="currentColor" stroke="none" fillRule="evenodd" d="M11 0h4l.8 3.6 2.6 1.5 3.6-1.1 2.4 3.6L22 10.400v5.200l2.500 2.800-2.400 3.600-3.700-1.100-2.600 1.500L15 26h-4l-.8-3.600-2.600-1.500L4 22l-2.500-3.600L4 15.600v-5.200L1.500 7.600 4 4l3.600 1.100 2.600-1.500zM13 6.500a6.500 6.500 0 1 0 0 13 6.500 6.500 0 0 0 0-13z" />
		<circle cx="13" cy="13" r="3.400" fill="currentColor" stroke="none" />
	</Icon>
);

const toolGroups: { label: string; active?: boolean; icon: ReactNode }[][] = [
	[
		{ label: "Chart", icon: <Icon><path d="M1 0v24.500h25" strokeWidth="2.500" /><path d="M7 15l7-7 4.500 5L26 5.500" strokeWidth="2.500" /></Icon> },
		{
			label: "Map",
			active: true,
			icon: <Icon><path d="M1.500 2L9 4.500l8-3.500 7.500 3v20l-7.500-2.500-8 3.500-7.500-3z" strokeWidth="2.400" /><path d="M3 5l6 2q4-1 6-3-2 5-5 6l-1 3-4-2zM7 14q5-2 9 0-2 6-4 7-3-3-5-7zM18 4l6 1v9l-4 3-1-5-3-3z" fill="currentColor" stroke="none" /></Icon>,
		},
	],
	[
		{
			label: "Pan",
			active: true,
			icon: <Icon><path d="M8.500 15L7 5M12 13L12 3M16 13l1.500-9M19.500 16L23 8M8 20L2 15" strokeWidth="3.400" strokeLinecap="round" /><path d="M6.500 12.500h14.500l-1 9q-2 4.500-6 4.500-5 0-8-6z" fill="currentColor" stroke="none" /></Icon>,
		},
		{ label: "Select", icon: <Icon><path d="M6 0v21l5-4.500 4 9.500 3.500-1.500-4-9 7.500-.5z" fill="currentColor" stroke="none" /></Icon> },
		{ label: "Radius", icon: <Icon><circle cx="13" cy="13" r="12.500" strokeWidth="2.500" /><circle cx="13" cy="13" r="3" fill="currentColor" stroke="none" /></Icon> },
		{
			label: "Rectangle",
			icon: <Icon><path d="M2 2h22v22H2z" /><g fill="currentColor" stroke="none"><circle cx="2" cy="2" r="3" /><circle cx="24" cy="2" r="3" /><circle cx="2" cy="24" r="3" /><circle cx="24" cy="24" r="3" /></g></Icon>,
		},
		{
			label: "Polygon",
			icon: <Icon><path d="M2 5l6 15 13-5 2-11-10 6z" /><g fill="currentColor" stroke="none"><circle cx="2" cy="5" r="3" /><circle cx="24" cy="4" r="3" /><circle cx="13" cy="10" r="3" /><circle cx="8" cy="20" r="3" /><circle cx="22" cy="15" r="3" /></g></Icon>,
		},
		{ label: "Lasso", icon: <Icon><ellipse cx="13.500" cy="10" rx="12" ry="6.500" strokeWidth="2.500" /><circle cx="7" cy="15" r="2.800" /><path d="M9 17q2 4-1 7" strokeWidth="2.500" /></Icon> },
		{ label: "Settings", icon: gear },
		{ label: "Clear", icon: <Icon><circle cx="13" cy="13" r="11.500" strokeWidth="2.800" /><path d="M5 21L21 5" strokeWidth="2.800" /></Icon> },
	],
	[
		{
			label: "Comments",
			icon: <Icon><path d="M10 6a9 9 0 1 1-4 17l-5 1.500 1.500-4A9 9 0 0 1 10 6z" fill="currentColor" stroke="none" /><path d="M11 3a9 9 0 0 1 13 14l1 4-5-1.500q2-11-9-16.500z" fill="currentColor" stroke="none" /></Icon>,
		},
		{ label: "Measure", icon: <Icon><path d="M0 6h3v5h2V6h3v5h2V6h3v5h2V6h3v5h2V6h6v14H0z" fill="currentColor" stroke="none" /></Icon> },
	],
	[
		{ label: "Zoom in", icon: <Icon size="size-5"><path d="M13 0v26M0 13h26" strokeWidth="3" /></Icon> },
		{ label: "Zoom to fit", icon: <Icon><path d="M1 8V1h7M18 1h7v7M25 18v7h-7M8 25H1v-7" strokeWidth="3" /><circle cx="12" cy="12" r="5" /><path d="M16 16l4 4" /></Icon> },
		{ label: "Zoom out", icon: <Icon size="size-5"><path d="M0 13h26" strokeWidth="3.500" /></Icon> },
	],
];

function Triangle({ size = "h-4 w-6" }: { size?: string }) {
	return (
		<svg viewBox="0 0 24 16" className={clsx(size, "shrink-0")} aria-hidden="true">
			<path d="M1 0h22q1.500 0 .6 1.500L13 15q-1 1.200-2 0L.4 1.500Q-.5 0 1 0z" fill="currentColor" />
		</svg>
	);
}

function Chevron() {
	return (
		<svg viewBox="0 0 28 16" fill="none" stroke="currentColor" strokeWidth="3" className="h-4 w-7" aria-hidden="true">
			<path d="M1 1l13 13L27 1" />
		</svg>
	);
}

/* ---------- layout ---------- */

function Header() {
	return (
		<header className="flex h-[100px] items-stretch bg-[#052a5f] text-white">
			<div className="flex items-center border-r-2 border-[#041a3c] pr-8 pl-8">
				<button type="button" aria-label="Back" className="mr-[66px]">
					<Icon size="size-[30px]"><path d="M25 13H3M12 4l-9 9 9 9" strokeWidth="3" /></Icon>
				</button>
				<div>
					<div className="text-[26px] leading-9 font-light">USA</div>
					<h1 className="text-[31px] leading-10">Territory Planning</h1>
				</div>
			</div>
			<div className="flex flex-col justify-center border-r-2 border-[#041a3c] px-8 text-[26px] leading-[34px]">
				<div className="flex items-center text-[24px]">
					<span className="text-[#c2c6cc]">USA Large</span>
					<span className="mx-1.5 size-4 rounded-full bg-white" />
					<span>Live Data</span>
				</div>
				<div>USA Large v3</div>
			</div>
			<button type="button" className="flex items-center gap-6 border-r-2 border-[#041a3c] px-[34px] text-left text-[26px] leading-[34px]">
				<span>
					<span className="block text-[24px] text-[#c2c6cc]">Focus</span>
					<span className="block">(4) Territories</span>
				</span>
				<Chevron />
			</button>
			<button type="button" className="flex items-center gap-6 px-[34px] text-left text-[26px] leading-[34px]">
				<span>
					<span className="block text-[24px] text-[#c2c6cc]">Hierarchy Level</span>
					<span className="block">Territory</span>
				</span>
				<Chevron />
			</button>

			<div className="ml-auto flex items-center pr-8">
				<div className="flex h-16 rounded-lg border-2 border-[#dddbda] text-[26px]">
					<button type="button" className="border-r-2 border-[#dddbda] px-8">Optimize</button>
					<button type="button" aria-label="More optimize options" className="px-5"><Triangle size="h-3 w-5" /></button>
				</div>
			</div>
			<button type="button" className="flex items-center gap-4 border-l-2 border-[#041a3c] px-8 text-[26px]">
				<Icon size="size-7"><path d="M1.500 15v10h23V15M13 20V3M6.500 9L13 2.500 19.500 9" strokeWidth="2.800" /></Icon>
				Publish
			</button>
			<button type="button" aria-label="Target" className="flex w-[98px] items-center justify-center border-l-2 border-[#041a3c]">
				<Icon size="size-7"><circle cx="13" cy="13" r="12" /><circle cx="13" cy="13" r="7" /><circle cx="13" cy="13" r="2.800" fill="currentColor" stroke="none" /></Icon>
			</button>
			<button type="button" aria-label="Help" className="flex w-[114px] items-center justify-center gap-1 border-l-2 border-[#041a3c]">
				<Icon><path d="M6 8.500q0-7 7.500-7t7.500 6.500q0 3.500-4 5.500-3 1.500-3 5" strokeWidth="4" /><rect x="11.500" y="21.500" width="5" height="5" rx="1.500" fill="currentColor" stroke="none" /></Icon>
				<Triangle size="h-2 w-3" />
			</button>
			<button type="button" aria-label="More actions" className="flex w-[98px] items-center justify-center border-l-2 border-[#041a3c]">
				<Icon><g fill="currentColor" stroke="none"><circle cx="13" cy="3.500" r="3.500" /><circle cx="13" cy="13" r="3.500" /><circle cx="13" cy="22.500" r="3.500" /></g></Icon>
			</button>
			<button type="button" aria-label="Setup" className="flex w-[97px] items-center justify-center border-l-2 border-[#041a3c]">{gear}</button>
		</header>
	);
}

function ActionBar() {
	return (
		<div className="flex h-[98px] items-center border-b-2 border-[#dddbda] bg-white px-8">
			<div className="flex h-16 rounded-lg border-2 border-[#c9c7c5] text-[#b0adab]">
				<button type="button" aria-label="Undo" className="flex w-[62px] items-center justify-center border-r-2 border-[#c9c7c5]">
					<Icon><path d="M9 1L2 8l7 7M2 8h12q8 0 8 8t-8 9" strokeWidth="2.500" /></Icon>
				</button>
				<button type="button" aria-label="Redo" className="flex w-[62px] items-center justify-center">
					<Icon><path d="M17 1l7 7-7 7M24 8H12q-8 0-8 8t8 9" strokeWidth="2.500" /></Icon>
				</button>
			</div>
			<button type="button" className="ml-8 h-16 rounded-lg border-2 border-[#c9c7c5] px-[30px] text-[26px] text-[#0176d3]">Alignment Owner Mismatch</button>
			<span className="ml-auto flex h-[50px] items-center rounded-full border-2 border-[#e5e5e5] px-4 text-[23px] font-bold text-[#181818]">In Progress</span>
			<button type="button" className="ml-8 h-16 rounded-lg border-2 border-[#0176d3] bg-[#0176d3] px-[30px] text-[26px] text-white">Submit for Approval</button>
		</div>
	);
}

function MapTools() {
	return (
		<div className="absolute top-8 left-4 flex flex-col gap-6">
			{toolGroups.map((group, g) => (
				<div key={g} className="flex w-16 flex-col divide-y-2 divide-[#c9c7c5] overflow-hidden rounded-lg bg-white shadow-[0_4px_10px_rgba(0,0,0,0.5)]">
					{group.map((tool) => (
						<button
							key={tool.label}
							type="button"
							aria-label={tool.label}
							className={clsx("flex h-16 items-center justify-center", tool.active ? "bg-[#0176d3] text-white" : "text-[#706e6b]")}
						>
							{tool.icon}
						</button>
					))}
				</div>
			))}
		</div>
	);
}

const tabs = ["Legend", "History", "Summary", "Layers", "Comments"];

const rows = [
	{ units: "3,913", owner: "Vance Channel", employees: "28" },
	{ units: "2,454", owner: "Andrew Irwin", employees: "13" },
	{ units: "1,383", owner: "Michael Occhineri", employees: "7" },
	{ units: "1,298", owner: "", employees: "8" },
];

function HeadCell({ children }: { children: string }) {
	return (
		<th className="border-r-2 border-[#d4d4d4] p-0 text-left font-bold">
			<span className="flex items-center gap-4 pl-7">
				<svg viewBox="0 0 4 22" className="h-[22px] w-1" fill="currentColor" aria-hidden="true">
					<circle cx="2" cy="3" r="2" /><circle cx="2" cy="11" r="2" /><circle cx="2" cy="19" r="2" />
				</svg>
				{children}
			</span>
		</th>
	);
}

function SidePanel() {
	return (
		<aside className="relative overflow-hidden bg-white">
			<div role="tablist" className="grid grid-cols-5 text-[26px] text-[#444]">
				{tabs.map((tab, i) => (
					<button
						key={tab}
						type="button"
						role="tab"
						aria-selected={i === 0}
						className={clsx("mr-1.5 h-[72px] border-b-[6px] pt-1 pl-6 text-left", i === 0 ? "border-[#1b96ff] text-[25px] font-bold text-[#181818]" : "border-[#e5e5e5]")}
					>
						{tab}
					</button>
				))}
			</div>
			<button type="button" aria-label="Collapse panel" className="absolute top-[46px] right-0 flex h-[76px] w-12 items-center justify-center rounded-l-full border-2 border-r-0 border-[#dddbda] bg-white pl-2 text-[#0176d3] shadow-[0_2px_12px_rgba(0,0,0,0.35)]">
				<Icon size="h-[26px] w-6"><path d="M18 1L6 13l12 12" strokeWidth="4" strokeLinecap="round" /></Icon>
			</button>

			<div className="flex items-end justify-between border-b-2 border-[#dddbda] px-8 pt-10 pb-6">
				<div>
					<label htmlFor="legend-view" className="block text-[24px] leading-9 text-[#444]">Legend View</label>
					<div className="relative mt-1 mb-1 w-[376px]">
						<select id="legend-view" className="h-16 w-full appearance-none rounded-lg border-2 border-[#c9c7c5] px-6 text-[25px] text-[#181818]">
							<option>Territory</option>
						</select>
						<span className="pointer-events-none absolute top-6 right-6 text-[#706e6b]"><Triangle /></span>
					</div>
				</div>
				<div className="flex gap-2">
					<button type="button" aria-label="Hierarchy" className="flex size-16 items-center justify-center rounded-lg border-2 border-[#c9c7c5] text-[#706e6b]">
						<Icon size="size-6"><path d="M9 0h8v7H9zM0 18h9v8H0zM17 18h9v8h-9z" fill="currentColor" stroke="none" /><path d="M13 6v7M4.500 19v-6h17v6" strokeWidth="2.500" /></Icon>
					</button>
					<button type="button" aria-label="Add" className="flex size-16 items-center justify-center rounded-lg border-2 border-[#c9c7c5] text-[#706e6b]">
						<Icon size="size-6"><path d="M13 0v26M0 13h26" strokeWidth="3" /></Icon>
					</button>
					<button type="button" className="flex h-16 items-center gap-4 rounded-lg border-2 border-[#c9c7c5] px-[30px] text-[26px] text-[#0176d3]">
						<Icon><g fill="currentColor" stroke="none"><path d="M9 4q1.500 7.500 9 9-7.500 1.500-9 9-1.500-7.500-9-9 7.500-1.500 9-9zM22 0q.8 3.500 4 4-3.200.8-4 4-.8-3.200-4-4 3.200-.5 4-4zM22 18q.8 3.500 4 4-3.200.8-4 4-.8-3.200-4-4 3.200-.5 4-4z" /></g></Icon>
						Formula Generator
					</button>
				</div>
			</div>

			<div className="flex h-[182px] items-center justify-end gap-7 border-b-2 border-[#e5e5e5] bg-[#f3f3f3] px-8 pt-12 text-[#706e6b]">
				<Icon><circle cx="13" cy="13" r="13" fill="currentColor" stroke="none" /><path d="M13 6v3.500M11 12h2.500v7M10.500 19.500h5.500" stroke="#f3f3f3" strokeWidth="2.500" /></Icon>
				<button type="button" aria-label="Filter" className="flex size-16 items-center justify-center rounded-lg border-2 border-[#c9c7c5] bg-white">
					<Icon><path d="M0 1h26L15 14v12h-3.500V14z" fill="currentColor" stroke="none" /></Icon>
				</button>
			</div>
			<div className="h-[102px] bg-[#f3f3f3]" />

			<table className="w-full table-fixed border-collapse text-[24px] text-[#16325c]">
				<colgroup>
					<col className="w-[500px]" />
					<col className="w-[200px]" />
					<col className="w-[368px]" />
					<col />
				</colgroup>
				<thead>
					<tr className="h-[54px] border-y-2 border-[#dddbda] bg-[#fafafa] text-[23px] text-[#3e3e3c]">
						<td className="border-r-2 border-[#d4d4d4]" />
						<HeadCell>Units</HeadCell>
						<HeadCell>Owner</HeadCell>
						<HeadCell>Empl..</HeadCell>
					</tr>
				</thead>
				<tbody>
					{rows.map((row) => (
						<tr key={row.units} className="h-14 even:bg-[#f3f3f3]">
							<td className="border-r-2 border-[#e5e5e5]" />
							<td className="border-r-2 border-[#d4d4d4] pr-2 text-right text-[25px]">{row.units}</td>
							<td className="border-r-2 border-[#d4d4d4] pl-2">{row.owner}</td>
							<td className="text-right text-[25px]">{row.employees}</td>
						</tr>
					))}
				</tbody>
				<tfoot>
					<tr className="h-[62px] border-b-2 border-[#c9c7c5] bg-[#e5e5e5] font-bold text-[#3e3e3c]">
						<td />
						<td className="border-r-2 border-[#c9c7c5] pr-2 text-right">9,048</td>
						<td className="border-r-2 border-[#c9c7c5]" />
						<td className="text-right">57</td>
					</tr>
				</tfoot>
			</table>
		</aside>
	);
}

const ruleOptions = ["Skip All Assignment Rules", "Simplify Boundary Rules", "Automatically Split Boundary Rules Into Child Territories"];

function PublishDialog() {
	return (
		<div className="fixed inset-0 flex items-start justify-center bg-[#080707]/60 pt-[452px]">
			<section role="dialog" aria-modal="true" aria-labelledby="publish-title" className="relative w-[1666px] max-w-full rounded-lg bg-white text-[#181818] shadow-[0_4px_6px_rgba(0,0,0,0.2)]">
				<button type="button" aria-label="Close" className="absolute -top-16 right-0 text-white">
					<Icon size="size-[34px]"><path d="M2 2l22 22M24 2L2 24" strokeWidth="4" strokeLinecap="round" /></Icon>
				</button>
				<h2 id="publish-title" className="border-b-4 border-[#e5e5e5] pt-7 pb-[30px] text-center text-[39px] leading-[56px]">Publish</h2>
				<div className="h-[498px] px-8">
					<h3 className="border-b-2 border-[#e5e5e5] pt-[26px] pb-7 text-[30px] leading-[50px] font-bold">Sales Territories</h3>
					<p className="pt-[30px] pb-8 text-[26px] leading-10">Some boundary rules were too large to create. Select an option below to resolve.</p>
					<div className="text-[26px] leading-[39px] text-[#444]">
						{ruleOptions.map((option, i) => (
							<label key={option} className="flex items-center gap-4">
								<input
									type="radio"
									name="rule"
									defaultChecked={i === 2}
									className="grid size-8 appearance-none place-content-center rounded-full border-2 border-[#c9c7c5] bg-white before:size-4 before:rounded-full checked:before:bg-[#0176d3]"
								/>
								{option}
							</label>
						))}
					</div>
					<div className="relative mt-8 ml-12 w-[622px]">
						<label htmlFor="publish-on" className="block text-[24px] leading-9 text-[#444]">Publish non-boundary assignment rules on</label>
						<select id="publish-on" className="mt-1 h-16 w-full appearance-none rounded-lg border-2 border-[#c9c7c5] px-6 text-[25px]">
							<option>Parent territory</option>
							<option>Child territories</option>
						</select>
						<span className="pointer-events-none absolute top-[66px] right-6 text-[#706e6b]"><Triangle /></span>
						<ul role="listbox" aria-label="Territory" className="absolute top-[108px] left-0 w-full rounded-lg border-2 border-[#e5e5e5] bg-white pt-2 pb-2 text-[23px] leading-[68px] shadow-[0_4px_6px_rgba(0,0,0,0.16)]">
							<li role="option" aria-selected="true" className="flex items-center gap-4 bg-[#f3f3f3] pl-[34px] text-[#181818]">
								<svg viewBox="0 0 30 22" fill="none" stroke="#0176d3" strokeWidth="4" className="h-[22px] w-[30px]" aria-hidden="true"><path d="M1 10l11 10L28 1" /></svg>
								Parent territory
							</li>
							<li role="option" aria-selected="false" className="pl-20">Child territories</li>
						</ul>
					</div>
				</div>
				<footer className="flex justify-end gap-4 rounded-b-lg border-t-4 border-[#e5e5e5] bg-[#f3f3f3] px-8 py-6 text-[26px]">
					<button type="button" className="h-16 rounded-lg border-2 border-[#c9c7c5] bg-white px-[30px] text-[#0176d3]">Previous</button>
					<button type="button" className="h-16 rounded-lg border-2 border-[#0176d3] bg-[#0176d3] px-[30px] text-white">Publish</button>
				</footer>
			</section>
		</div>
	);
}

export default function App() {
	return (
		<div className="flex h-screen flex-col overflow-hidden font-['Noto_Sans','Open_Sans',sans-serif]">
			<Header />
			<ActionBar />
			<main className="grid min-h-0 flex-1 grid-cols-[1800fr_1192fr]">
				<div className="relative overflow-hidden">
					<TerritoryMap />
					<MapTools />
					<div className="absolute bottom-5 left-5 flex h-3 w-[52px] justify-center bg-white/40">
						<span className="w-8 rounded-md border-2 border-[#706e6b] border-t-transparent" />
					</div>
					<button type="button" aria-label="Map info" className="absolute bottom-5 left-5 flex size-12 items-center justify-center rounded-full bg-white/40 text-[#333]">
						<Icon size="size-7"><circle cx="13" cy="13" r="13" fill="currentColor" stroke="none" /><path d="M13 5v3.500M13 11v9" stroke="#fff" strokeWidth="3.500" /></Icon>
					</button>
					<div className="absolute right-5 bottom-5 h-11 w-[115px] border-3 border-t-0 border-b-4 border-[#333] bg-white/30 pl-3 font-['Liberation_Sans',Arial,sans-serif] text-[20px] leading-[42px] text-[#222]">200 mi</div>
				</div>
				<SidePanel />
			</main>
			<PublishDialog />
		</div>
	);
}
